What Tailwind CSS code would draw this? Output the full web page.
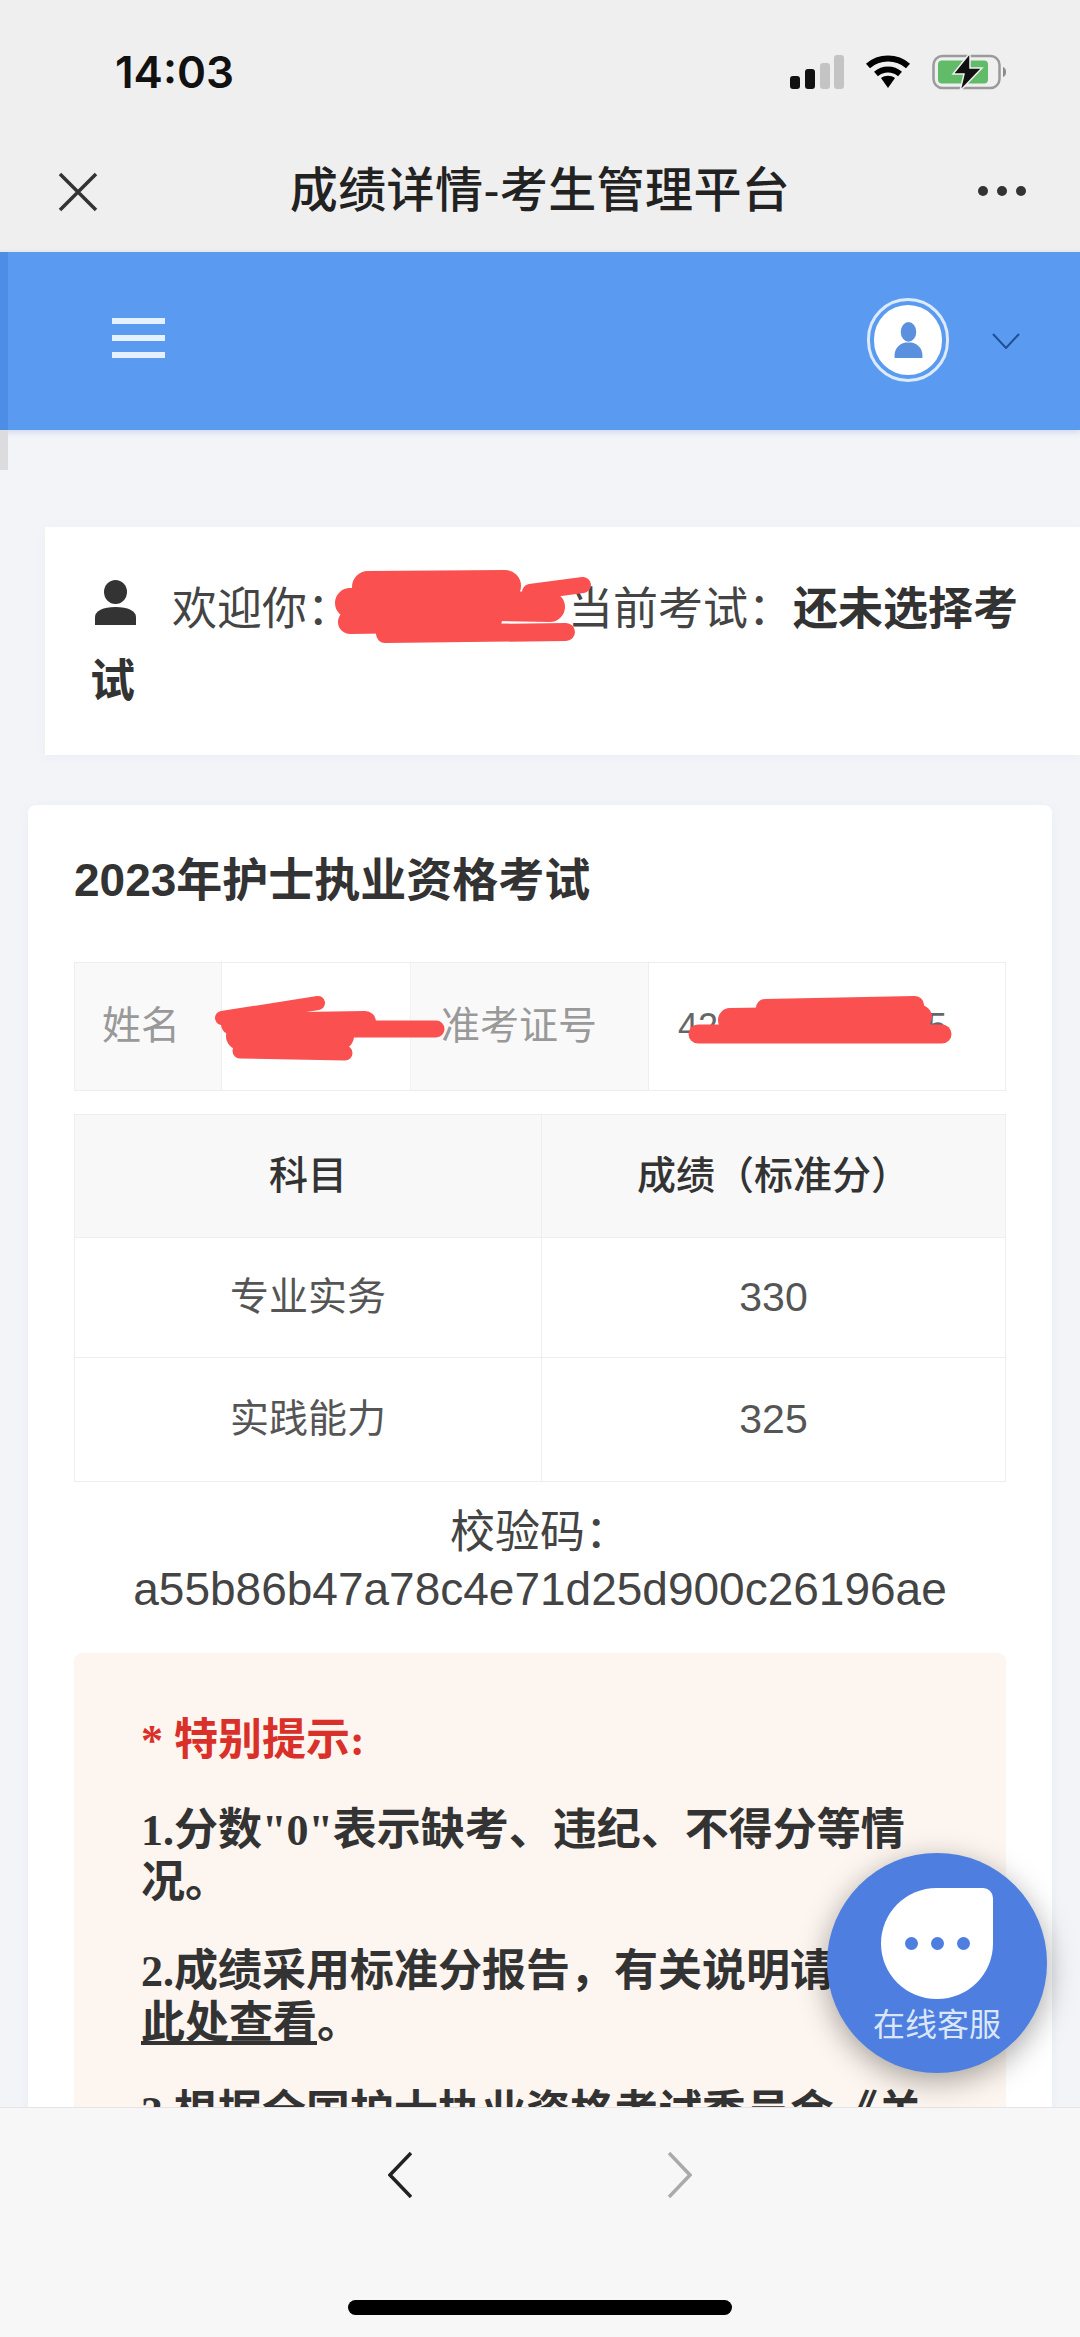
<!DOCTYPE html>
<html lang="zh-CN">
<head>
  <meta charset="UTF-8">
  <meta name="viewport" content="width=device-width, initial-scale=1.0">
  <title>成绩详情-考生管理平台</title>
  <script src="https://cdn.jsdelivr.net/npm/@tailwindcss/browser@4"></script>
</head>
<body>
  <div class="relative w-[1080px] h-[2337px] overflow-hidden flex flex-col bg-[#f2f4f8] text-[#333] font-['Liberation_Sans','Noto_Sans_CJK_SC',sans-serif]">

    <!-- Status bar + title -->
    <header class="h-[252px] shrink-0 bg-[#efefef]">
      <div class="h-[128px] pt-[46px] pl-[115px] pr-[72px] flex justify-between items-start">
        <span class="font-['Inter',sans-serif] font-semibold text-[44px] leading-[52px] text-[#111]">14:03</span>
        <div class="flex items-center gap-[21px] pt-[7px] ml-auto">
          <svg width="54" height="34" viewBox="0 0 54 34">
            <rect x="0" y="21" width="10" height="13" rx="3" fill="#111"/>
            <rect x="15" y="14" width="10" height="20" rx="3" fill="#111"/>
            <rect x="30" y="8" width="10" height="26" rx="3" fill="#c4c4c4"/>
            <rect x="44" y="0" width="10" height="34" rx="3" fill="#c4c4c4"/>
          </svg>
          <svg width="46" height="34" viewBox="0 0 46 34" fill="none" stroke="#000" stroke-width="6">
            <path d="M3 11 C14 1 32 1 43 11"/>
            <path d="M11 19 C18 13 28 13 35 19"/>
            <path d="M16 23 L23 33 L30 23 C26 20 20 20 16 23 Z" fill="#000" stroke="none"/>
          </svg>
          <svg width="76" height="38" viewBox="0 0 76 38" fill="none">
            <rect x="1.5" y="3" width="66" height="32" rx="9" stroke="#9a9a9a" stroke-width="2.5"/>
            <rect x="6" y="7.5" width="50" height="23" rx="4" fill="#62bb68"/>
            <path d="M71 14 C75 15 75 23 71 24 Z" fill="#8a8a8a"/>
            <path d="M38 0 L21 21 L32 21 L28 38 L50 15 L38 15 Z" fill="#111" stroke="#efefef" stroke-width="1.5"/>
          </svg>
        </div>
      </div>
      <div class="relative h-[124px] flex items-start justify-center">
        <h1 class="mt-[36px] text-[48px] leading-[54px] font-medium tracking-[0.4px] text-[#222]">成绩详情-考生管理平台</h1>
        <svg class="absolute left-[58px] top-[44px]" width="40" height="40" viewBox="0 0 40 40" fill="none" stroke="#333" stroke-width="3.5">
          <path d="M2 2 L38 38 M38 2 L2 38"/>
        </svg>
        <div class="absolute left-[978px] top-[58px] flex gap-[9px]">
          <span class="w-[10px] h-[10px] rounded-full bg-[#333]"></span>
          <span class="w-[10px] h-[10px] rounded-full bg-[#333]"></span>
          <span class="w-[10px] h-[10px] rounded-full bg-[#333]"></span>
        </div>
      </div>
    </header>

    <!-- Blue top nav -->
    <nav class="h-[178px] shrink-0 bg-[#5b9af1] flex items-center pl-[112px] pr-[60px] shadow-[0_2px_6px_rgba(90,130,200,0.25)] border-l-[8px] border-[#4d8de6]">
      <div class="-ml-[8px] flex flex-col gap-[11px] -mt-[6px]">
        <span class="block w-[53px] h-[6px] bg-[#e6f1ff]"></span>
        <span class="block w-[53px] h-[6px] bg-[#e6f1ff]"></span>
        <span class="block w-[53px] h-[6px] bg-[#e6f1ff]"></span>
      </div>
      <div class="ml-auto flex items-center gap-[43px]">
        <div class="w-[82px] h-[84px] rounded-full border-[3px] border-[#dcebff] p-[4px] -mt-[2px]">
          <div class="w-full h-full rounded-full bg-white flex items-center justify-center">
            <svg width="31" height="36" viewBox="0 0 36 44" fill="#5b90de">
              <ellipse cx="18" cy="12" rx="9.5" ry="12"/>
              <path d="M1 44 C0 33 6 27 14 25 L22 25 C30 27 36 33 35 44 Z"/>
            </svg>
          </div>
        </div>
        <svg width="28" height="16" viewBox="0 0 28 16" fill="none" stroke="#1f4f94" stroke-width="2">
          <path d="M1 1 L14 15 L27 1"/>
        </svg>
      </div>
    </nav>
    <div class="absolute left-0 top-[430px] w-[8px] h-[40px] bg-[#dcdcdf]"></div>

    <!-- Page content -->
    <main class="flex-1 min-h-0 overflow-hidden pt-[97px]">
      <section class="ml-[45px] h-[228px] bg-white pt-[47px] pl-[45px] pr-[40px] text-[45px] leading-[72px] text-[#444] shadow-[0_2px_10px_rgba(120,130,150,0.06)]">
        <svg class="inline-block align-baseline ml-[5px] mr-[36px]" width="41" height="45" viewBox="0 0 41 45" fill="#333">
          <ellipse cx="20.5" cy="12" rx="11.5" ry="12"/>
          <path d="M0 45 L0 37 C0 31 8 27 20.5 27 C33 27 41 31 41 37 L41 45 Z"/>
        </svg><span>欢迎你：</span><span class="inline-block w-[216px]"></span><span>当前考试：</span><span class="font-semibold text-[#333]">还未选择考试</span>
      </section>

      <section class="mx-[28px] mt-[50px] bg-white rounded-lg pt-[45px] px-[46px] pb-[40px] h-[1400px] shadow-[0_2px_12px_rgba(120,130,150,0.06)]">
        <h2 class="text-[46px] leading-[60px] font-semibold text-[#333]">2023年护士执业资格考试</h2>

        <!-- Candidate info -->
        <div class="mt-[52px] h-[129px] grid grid-cols-[147px_189px_238px_1fr] border border-[#eeeeee] text-[39px]">
          <div class="bg-[#f9f9f9] border-r border-[#eeeeee] flex items-center pl-[27px] text-[#999]">姓名</div>
          <div class="border-r border-[#f2f2f2]"></div>
          <div class="bg-[#f9f9f9] border-r border-[#eeeeee] flex items-center pl-[30px] text-[#999]">准考证号</div>
          <div class="flex items-center justify-between pl-[29px] pr-[58px] text-[36px] text-[#666]"><span>42</span><span>15</span></div>
        </div>

        <!-- Scores -->
        <table class="mt-[23px] w-full table-fixed border-collapse text-center text-[39px] text-[#555]">
          <thead>
            <tr class="h-[123px] bg-[#f8f8f8]">
              <th class="w-[467px] border border-[#eeeeee] font-medium text-[#333]">科目</th>
              <th class="border border-[#eeeeee] font-medium text-[#333]">成绩（标准分）</th>
            </tr>
          </thead>
          <tbody>
            <tr class="h-[120px]">
              <td class="border border-[#eeeeee]">专业实务</td>
              <td class="border border-[#eeeeee] text-[41px]">330</td>
            </tr>
            <tr class="h-[124px]">
              <td class="border border-[#eeeeee]">实践能力</td>
              <td class="border border-[#eeeeee] text-[41px]">325</td>
            </tr>
          </tbody>
        </table>

        <div class="mt-[23px] text-center text-[45px] leading-[56px] text-[#444]">
          <p>校验码：</p>
          <p class="text-[46px]">a55b86b47a78c4e71d25d900c26196ae</p>
        </div>

        <!-- Special notice -->
        <div class="mt-[36px] bg-[#fdf5ef] rounded-lg pt-[62px] pl-[67px] pr-[74px] pb-[40px] font-['Liberation_Serif','Noto_Sans_CJK_SC',serif] font-bold text-[44px] leading-[52px] text-[#333]">
          <p class="text-[#d9302a]">* 特别提示:</p>
          <p class="mt-[38px]">1.分数"0"表示缺考、违纪、不得分等情况。</p>
          <p class="mt-[37px]">2.成绩采用标准分报告，有关说明请点击<span class="underline">此处查看</span>。</p>
          <p class="mt-[37px]">3.根据全国护士执业资格考试委员会《关于</p>
        </div>
      </section>
    </main>

    <!-- Bottom browser bar -->
    <footer class="relative h-[230px] shrink-0 bg-[#f7f7f7] border-t border-[#e4e4e4]">
      <div class="pt-[44px] flex justify-center gap-[256px]">
        <svg width="24" height="46" viewBox="0 0 24 46" fill="none" stroke="#222" stroke-width="3.5">
          <path d="M23 1 L2 23 L23 45"/>
        </svg>
        <svg width="24" height="46" viewBox="0 0 24 46" fill="none" stroke="#aaaaaa" stroke-width="3.5">
          <path d="M1 1 L22 23 L1 45"/>
        </svg>
      </div>
      <div class="absolute left-[348px] top-[192px] w-[384px] h-[15px] rounded-full bg-black"></div>
    </footer>

    <!-- Floating support button -->
    <div class="absolute left-[827px] top-[1853px] w-[220px] h-[220px] rounded-full bg-[#4d7ee0] shadow-[0_8px_30px_rgba(0,0,0,0.35)] flex flex-col items-center pt-[35px]">
      <div class="w-[112px] h-[111px] bg-white rounded-[56px] rounded-tr-[10px] flex items-center justify-center gap-[13px]">
        <span class="w-[13px] h-[13px] rounded-full bg-[#4d7ee0]"></span>
        <span class="w-[13px] h-[13px] rounded-full bg-[#4d7ee0]"></span>
        <span class="w-[13px] h-[13px] rounded-full bg-[#4d7ee0]"></span>
      </div>
      <span class="mt-[6px] text-[32px] leading-[40px] text-[#dbe6f8]">在线客服</span>
    </div>

    <!-- Red redaction scribbles over the names and number -->
    <svg class="absolute inset-0 pointer-events-none" width="1080" height="2337" viewBox="0 0 1080 2337" fill="none" stroke="#fb5050" stroke-linecap="round">
      <path d="M368 587 L505 586" stroke-width="32"/>
      <path d="M530 592 L583 585" stroke-width="16"/>
      <path d="M350 603 L550 607" stroke-width="30"/>
      <path d="M350 622 L490 620" stroke-width="24"/>
      <path d="M385 634 L566 632" stroke-width="18"/>
      <path d="M222 1018 L318 1003" stroke-width="14"/>
      <path d="M232 1024 L365 1022" stroke-width="22"/>
      <path d="M240 1036 L340 1036" stroke-width="28"/>
      <path d="M340 1029 L436 1029" stroke-width="17"/>
      <path d="M240 1051 L345 1053" stroke-width="15"/>
      <path d="M765 1008 L915 1005" stroke-width="18"/>
      <path d="M730 1020 L920 1017" stroke-width="24"/>
      <path d="M698 1034 L942 1034" stroke-width="19"/>
    </svg>
  </div>
</body>
</html>
